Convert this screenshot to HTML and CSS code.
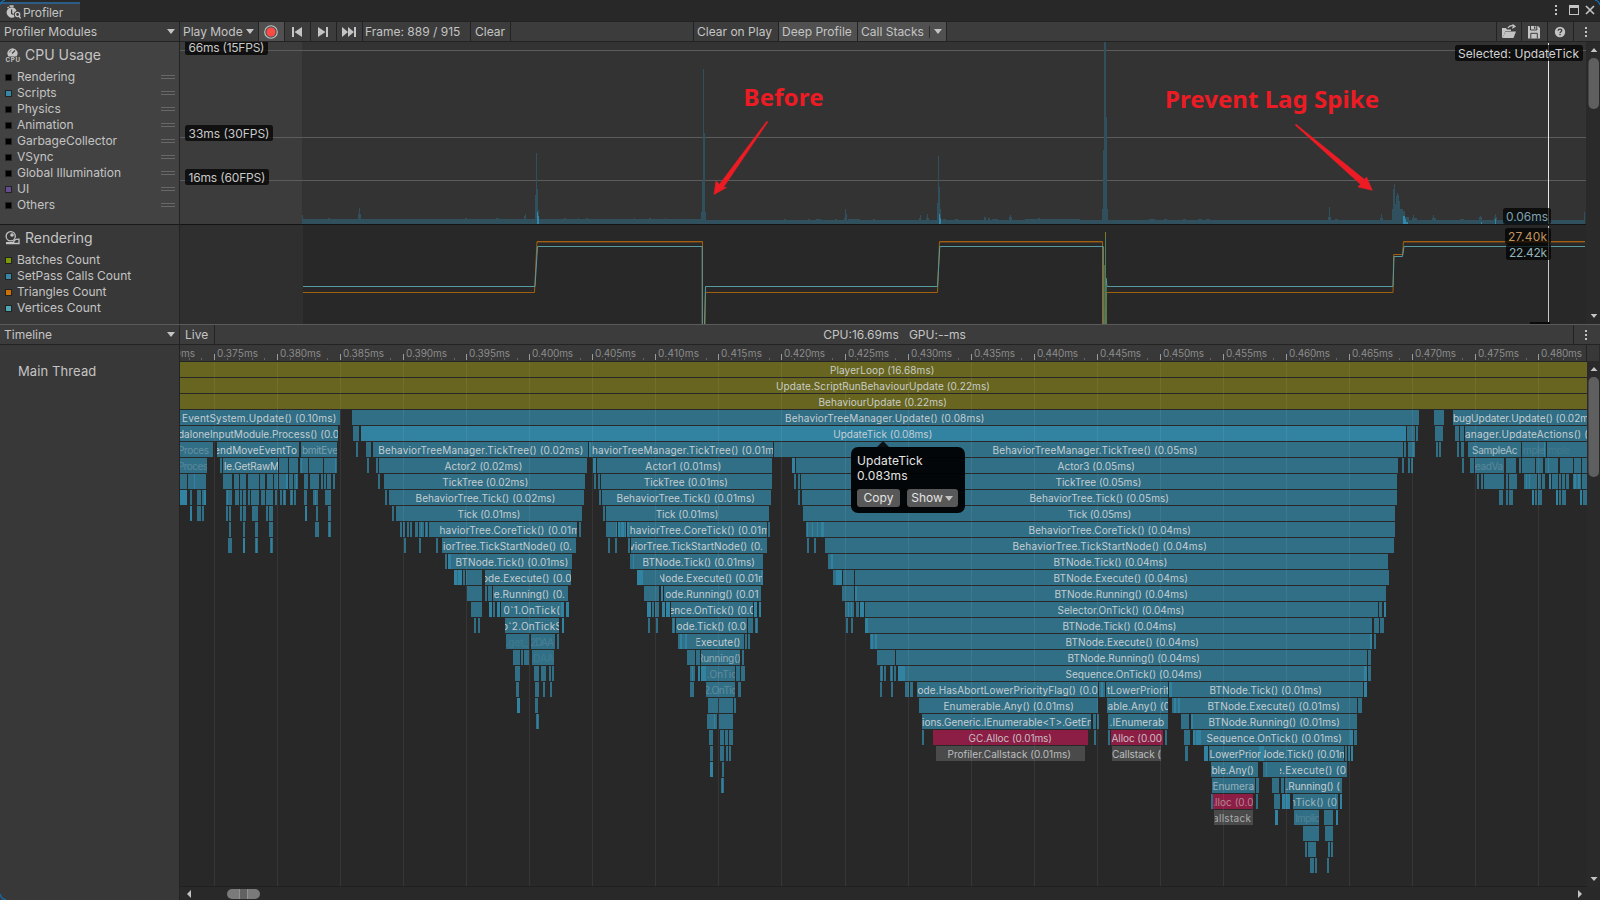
FILE: index.html
```html
<!DOCTYPE html>
<html lang="en">
<head>
<meta charset="utf-8">
<title>Profiler</title>
<link rel="stylesheet" href="styles.css">
</head>
<body>
<div class="window">
  <header class="titlebar">
    <div class="tab">
      <svg class="tab-icon" width="15" height="15" viewBox="0 0 15 15"><path d="M3.6 0.3h4v1.6h-4z" fill="#c4c4c4"/><path d="M1 2.6l1.3-1 .9 1-1.2 1z" fill="#c4c4c4"/><path d="M5.6 2.2a5.3 5.3 0 0 1 4.9 3.9C8.4 6.6 7.600 8 8 10.500c.1.800.5 1.300.7 1.500A5.300 5.300 0 1 1 5.600 2.200z" fill="#c4c4c4"/><path d="M5.600 4.500v4l2 1" stroke="#3c3c3c" stroke-width="1.300" fill="none"/><circle cx="11.600" cy="9.500" r="2.100" fill="none" stroke="#c4c4c4" stroke-width="1.300"/><path d="M13 11l1.600 2.300" stroke="#c4c4c4" stroke-width="1.400"/></svg>
      <span class="tab-text">Profiler</span>
    </div>
    <svg class="window-icons" width="50" height="20" viewBox="1550 0 50 20"><g fill="#c4c4c4"><path d="M1555 5h2v2h-2zM1555 9h2v2h-2zM1555 13h2v2h-2z"/><path d="M1569 5h10v10h-10zM1570 8v6h8V8z" fill-rule="evenodd"/></g><path d="M1586 6l8 8M1594 6l-8 8" stroke="#c4c4c4" stroke-width="1.700"/></svg>
  </header>

  <div class="toolbar">
    <div class="cell modules"><span>Profiler Modules</span><i class="caret"></i></div>
    <div class="cell mode"><span>Play Mode</span><i class="caret"></i></div>
    <div class="cell rec"><svg width="16" height="16" viewBox="0 0 16 16"><circle cx="8" cy="8" r="6.300" fill="none" stroke="#c4c4c4" stroke-width="1.100"/><circle cx="8" cy="8" r="4.500" fill="#ff4b44"/></svg></div>
    <div class="cell step"><svg width="14" height="12" viewBox="0 0 14 12"><path d="M2 1h2v10H2zM12 1v10L4.500 6z" fill="#c4c4c4"/></svg></div>
    <div class="cell step"><svg width="14" height="12" viewBox="0 0 14 12"><path d="M10 1h2v10h-2zM2 1v10l7.500-5z" fill="#c4c4c4"/></svg></div>
    <div class="cell step"><svg width="16" height="12" viewBox="0 0 16 12"><path d="M1 1v10l6-5zM7 1v10l6-5zM13 1h2v10h-2z" fill="#c4c4c4"/></svg></div>
    <div class="cell frame"><span>Frame: 889 / 915</span></div>
    <div class="cell clear"><span>Clear</span></div>
    <div class="cell space"></div>
    <div class="cell clearplay"><span>Clear on Play</span></div>
    <div class="cell deep on"><span>Deep Profile</span></div>
    <div class="cell stacks on"><span>Call Stacks</span><b></b><i class="caret"></i></div>
    <div class="cell grow"></div>
    <div class="cell ico w25"><svg width="16" height="15" viewBox="0 0 16 15"><path d="M1 14V4h4l1 1.500h4V7H4.500L2 13z" fill="#c4c4c4"/><path d="M4.500 7.500H15L12.500 14H1.500z" fill="#c4c4c4"/><path d="M7 4c1-2 3.500-3 6-1.700M11.500.5l2.500 2-2.800 1.700" fill="none" stroke="#c4c4c4" stroke-width="1.200"/></svg></div>
    <div class="cell ico w26"><svg width="14" height="14" viewBox="0 0 14 14"><path d="M1 1h10l2 2v10.500H1z" fill="#c4c4c4"/><path d="M3.500 1v4h6.300V1M3.800 13.500V8.300h6.500v5.200" fill="none" stroke="#3c3c3c" stroke-width="1"/><path d="M7 1.500h1.300v2.200H7z" fill="#3c3c3c"/></svg></div>
    <div class="cell ico w26"><svg width="12" height="12" viewBox="0 0 12 12"><circle cx="6" cy="6" r="5.200" fill="#c4c4c4"/><path d="M4.200 4.700C4.200 2.400 7.800 2.600 7.800 4.600 7.800 5.800 6 5.700 6 7.200M6 8v1.300" fill="none" stroke="#3c3c3c" stroke-width="1.300"/></svg></div>
    <div class="cell ico last"><svg width="4" height="12" viewBox="0 0 4 12"><path d="M1 1h2v2H1zM1 5h2v2H1zM1 9h2v2H1z" fill="#c4c4c4"/></svg></div>
  </div>

  <div class="charts">
    <aside class="modules-panel">
      <section class="module cpu">
        <h2><svg width="16" height="16" viewBox="0 0 16 16"><path d="M3.500 9.500A5 5 0 1 1 11.500 9.500z" fill="#c4c4c4"/><path d="M7 6.500l3-3" stroke="#424242" stroke-width="1.300"/><path d="M4.300 5.500l.7-1.500 1.500-.8" stroke="#424242" stroke-width=".7" fill="none"/><text x=".5" y="15.300" font-size="6.200" font-weight="700" textLength="14.500" fill="#c4c4c4">CPU</text></svg>CPU Usage</h2>
        <ul>
          <li><i class="sw black"></i>Rendering<u></u></li>
          <li><i class="sw blue"></i>Scripts<u></u></li>
          <li><i class="sw black"></i>Physics<u></u></li>
          <li><i class="sw black"></i>Animation<u></u></li>
          <li><i class="sw black"></i>GarbageCollector<u></u></li>
          <li><i class="sw black"></i>VSync<u></u></li>
          <li><i class="sw black"></i>Global Illumination<u></u></li>
          <li><i class="sw purple"></i>UI<u></u></li>
          <li><i class="sw black"></i>Others<u></u></li>
        </ul>
      </section>
      <section class="module rendering">
        <h2><svg width="16" height="16" viewBox="0 0 16 16"><circle cx="5.700" cy="6.300" r="4.600" fill="none" stroke="#c4c4c4" stroke-width="1.300"/><circle cx="7" cy="5" r="1.800" fill="#c4c4c4"/><path d="M8.500 12.500c.5-2.500 1.500-3.500 5.500-3.300v4.300H1" fill="none" stroke="#c4c4c4" stroke-width="1.300"/><path d="M1 12h8v2H1z" fill="#c4c4c4"/></svg>Rendering</h2>
        <ul>
          <li><i class="sw green"></i>Batches Count</li>
          <li><i class="sw blue"></i>SetPass Calls Count</li>
          <li><i class="sw orange"></i>Triangles Count</li>
          <li><i class="sw teal"></i>Vertices Count</li>
        </ul>
      </section>
    </aside>
    <svg class="chart" id="chart" width="1406" height="282" viewBox="180 42 1406 282"></svg>
    <svg class="vscroll" width="14" height="282" viewBox="1586 42 14 282"><path d="M1594 48l3.300 4h-6.600zM1594 318l3.300-4h-6.600z" fill="#c4c4c4"/><rect x="1588.500" y="58" width="10.500" height="51" rx="5" fill="#5f5f5f"/></svg>
  </div>

  <div class="toolbar details">
    <div class="cell modules"><span>Timeline</span><i class="caret"></i></div>
    <div class="cell live"><span>Live</span></div>
    <div class="cell grow stats"><span>CPU:16.69ms&nbsp;&nbsp; GPU:--ms</span></div>
    <div class="cell ico last"><svg width="4" height="12" viewBox="0 0 4 12"><path d="M1 1h2v2H1zM1 5h2v2H1zM1 9h2v2H1z" fill="#c4c4c4"/></svg></div>
  </div>

  <div class="timeline">
    <aside class="threads"><span>Main Thread</span></aside>
    <svg class="flame" id="flame" width="1420" height="555" viewBox="180 345 1420 555"></svg>
    <div class="popup">
      <div class="popup-text">UpdateTick<br>0.083ms</div>
      <div class="popup-buttons"><span class="btn copy">Copy</span><span class="btn show">Show<i class="caret"></i></span></div>
    </div>
  </div>
  <svg class="corners" width="1600" height="900" viewBox="0 0 1600 900"><g fill="none" stroke="#176aa8" stroke-width="1.300"><path d="M0 5Q1 1 5 0"/><path d="M1595 0Q1599 1 1600 5"/><path d="M0 894Q1 899 6 900"/></g></svg>
</div>
<script src="timeline.js"></script>
</body>
</html>
```
FILE: styles.css
```css
* { box-sizing: border-box; }
body { margin: 0; background: #282828; overflow: hidden; }
.window {
  width: 1600px; height: 900px; position: relative;
  display: flex; flex-direction: column;
  font-family: Inter, "Liberation Sans", sans-serif;
  font-size: 12px; color: #c4c4c4; background: #282828;
}
.titlebar { height: 21px; display: flex; justify-content: space-between; background: #282828; }
.tab {
  width: 80px; height: 19px; margin-top: 2px; padding-left: 6px;
  display: flex; align-items: center; gap: 2px;
  background: #3c3c3c; border-top: 2px solid #2c5d87;
}
.tab-icon { margin-top: -1px; flex: none; }
.tab-text { letter-spacing: -0.1px; line-height: 16px; }
.toolbar { height: 21px; display: flex; background: #3c3c3c; border-top: 1px solid #232323; border-bottom: 1px solid #232323; }
.cell {
  height: 19px; flex: none; display: flex; align-items: center; white-space: nowrap;
  border-right: 1px solid #232323; line-height: 19px;
}
.caret { width: 0; height: 0; flex: none; border: 4px solid transparent; border-top: 5px solid #c4c4c4; border-bottom: 0; }
.modules { width: 180px; padding: 0 4px; justify-content: space-between; }
.mode { width: 79px; padding: 0 4px 0 3px; justify-content: space-between; }
.rec { width: 26px; padding-right: 2px; justify-content: center; background: #505050; }
.step { width: 26px; padding-right: 2px; justify-content: center; }
.frame { width: 108px; padding-left: 2px; }
.clear { width: 40px; padding-left: 4px; }
.space { width: 183px; }
.clearplay { width: 85px; padding-left: 3px; }
.deep { width: 79px; padding-left: 3px; }
.on { background: #505050; }
.stacks { width: 89px; padding-left: 3px; }
.stacks b { width: 1px; height: 12px; margin: 0 4px 0 5px; background: #2c2c2c; }
.grow { flex: 1; }
.ico { justify-content: center; padding-right: 1px; }
.w25 { width: 25px; }
.w26 { width: 26px; }
.last { width: 26px; border-right: 0; padding-right: 2px; }
.charts { height: 282px; display: flex; }
.modules-panel { width: 180px; border-right: 1px solid #232323; display: flex; flex-direction: column; }
.module { padding: 2px 4px 0 5px; }
.cpu { height: 183px; background: #424242; border-bottom: 1px solid #191919; }
.rendering { height: 99px; background: #383838; }
.module h2 { margin: 0 0 5px; height: 20px; display: flex; align-items: center; gap: 4px; font-size: 14px; font-weight: 400; letter-spacing: 0; }
.module h2 svg { margin-top: 1px; }
.module ul { margin: 0; padding: 0; list-style: none; }
.module li { height: 16px; display: flex; align-items: center; line-height: 16px; }
.sw { width: 7px; height: 7px; margin-right: 5px; border: 1px solid #222; flex: none; }
.black { background: #000; } .blue { background: #3588a8; } .purple { background: #654b8f; }
.green { background: #7c9a06; } .orange { background: #cb7204; } .teal { background: #4ea8b4; }
.module li u { width: 14px; height: 4px; margin-left: auto; border-top: 1px solid #686868; border-bottom: 1px solid #686868; }
.vscroll { background: #2a2a2a; flex: none; }
.chart { flex: none; display: block; }
.details { border-top-color: #5a5a5a; }
.live { width: 35px; padding-left: 5px; }
.stats { justify-content: center; padding-left: 1px; }
.timeline { height: 555px; display: flex; position: relative; }
.threads { width: 180px; padding: 16px 0 0 18px; background: #383838; border-right: 1px solid #232323; font-size: 13px; line-height: 20px; letter-spacing: .1px; }
.flame { flex: none; display: block; }
.bt { font-size: 10px; fill: #d2d6d8; }
.rl { font-size: 10px; fill: #8c8c8c; }
.lb { font-size: 12px; fill: #c8c8c8; }
.note { font-family: "Noto Sans", "Open Sans", sans-serif; font-size: 24px; font-weight: 700; fill: #ed1c24; }
.popup {
  position: absolute; left: 851px; top: 102px; width: 114px; height: 66px; padding: 6px 6px;
  background: rgba(0, 0, 0, .94); border-radius: 7px; color: #e4e4e4;
}
.popup::before { content: ""; position: absolute; left: 26px; top: -6px; border: 6px solid transparent; border-bottom-color: #0b1114; border-top: 0; }
.popup-text { line-height: 15px; letter-spacing: .15px; }
.popup-buttons { margin-top: 6px; display: flex; gap: 7px; }
.btn { height: 18px; line-height: 18px; border-radius: 3px; background: #585858; display: flex; align-items: center; justify-content: center; gap: 2px; }
.copy { width: 43px; } .show { width: 51px; padding-right: 1px; }
.corners { position: absolute; left: 0; top: 0; pointer-events: none; }
```
FILE: timeline.js
```js
// ---- Module charts ----
(function () {
  let s = '';
  const rect = (x, y, w, h, f, extra) => { s += `<rect x="${x}" y="${y}" width="${w}" height="${h}" fill="${f}" ${extra || ''}/>`; };
  rect(180, 42, 122, 182, '#3c3c3c');
  rect(302, 42, 1284, 182, '#333333');
  rect(180, 225, 123, 99, '#2f2f2f');
  rect(303, 225, 1283, 99, '#282828');
  [50, 137, 180].forEach(y => rect(180, y, 1406, 1, '#5c5c5c'));

  // script time per frame: base band plus [x, top, width] spikes
  const area = '#31505d';
  rect(302, 219, 402, 5, area);
  rect(704, 220, 881, 4, area);
  [[302, 215, 1], [358, 214, 3], [359, 208, 1], [328, 218, 2], [465, 218, 2], [496, 218, 3], [524, 216, 2], [525, 214, 1],
   [535, 195, 2], [536, 153, 1], [537, 189, 1], [538, 210, 1],
   [564, 218, 2], [578, 218, 1], [586, 218, 2], [634, 218, 1], [649, 218, 2], [665, 218, 1],
   [701, 212, 5], [702, 181, 1], [703, 69, 1], [704, 133, 1],
   [784, 219, 2], [808, 219, 2], [816, 219, 5], [835, 219, 2], [844, 218, 3], [845, 209, 1], [846, 214, 1], [848, 219, 12], [873, 219, 2],
   [919, 218, 2], [920, 215, 1], [926, 218, 3], [927, 214, 1],
   [937, 203, 2], [938, 156, 1], [939, 187, 1], [940, 209, 1], [943, 219, 3], [955, 219, 3], [984, 217, 2], [988, 218, 2], [992, 219, 6],
   [1009, 217, 3], [1010, 215, 1], [1025, 219, 55], [1038, 218, 2],
   [1102, 209, 6], [1103, 150, 1], [1104, 42, 2], [1106, 117, 1],
   [1149, 219, 6], [1164, 219, 3], [1183, 219, 3], [1198, 219, 4], [1206, 219, 4],
   [1328, 217, 3], [1329, 207, 1], [1335, 219, 3], [1380, 218, 3], [1381, 214, 1],
   [1392, 209, 11], [1393, 189, 1], [1394, 184, 1], [1395, 204, 1], [1396, 196, 1], [1397, 193, 1], [1398, 195, 1], [1399, 201, 1], [1400, 209, 1],
   [1403, 211, 2], [1405, 217, 4], [1412, 218, 5], [1413, 215, 1], [1432, 218, 4], [1433, 215, 1], [1460, 219, 4], [1479, 217, 3], [1480, 216, 1],
   [1494, 217, 3], [1495, 214, 1], [1584, 212, 1]
  ].forEach(([x, y, w]) => rect(x, y, w, 224 - y, area));
  [[537, 212, 1], [538, 216, 1], [939, 214, 1], [940, 218, 1], [1403, 216, 2], [1405, 219, 1], [1406, 222, 2], [1481, 222, 1], [1495, 219, 1]]
    .forEach(([x, y, w]) => rect(x, y, w, 224 - y, '#3288ab'));
  rect(180, 224, 1406, 1, '#141414');

  // geometry counters
  const line = (d, c, o) => { s += `<path d="${d}" fill="none" stroke="${c}" stroke-width="1" opacity="${o || 1}"/>`; };
  line('M537 242.500H702M939.500 242.500H1103M1404 242.500H1585', '#6a4420', .7);
  line('M303 292.500H534.500L537 241.500H702.500V324M705 324L705.500 292.500H937.500L939.500 241.500H1102.500V324M1106.500 324V292.500H1393L1393.700 254.500H1402.500L1403.500 241.500H1585', '#a2600f');
  line('M303 286.500H535L537.500 246.500H702.200V324M704.500 324L705.500 286.500H937.500L939.800 246.500H1103.300V324M1105 324L1106 278L1107 286.500H1393L1394 256.500H1402.500L1404 246.500H1585', '#559aa0');
  rect(1105, 233, 1, 91, '#4d7f58');
  rect(1106, 286, 1, 38, '#4d7f58', 'opacity=".7"');
  rect(1103, 265, 2, 59, '#64794f', 'opacity=".7"');
  rect(1105, 232, 1, 6, '#7c7b1f');

  // selected frame marker and labels
  const label = (x, y, w, h, t, tx, ty, tl, c) => {
    rect(x, y, w, h, '#000', 'rx="2.5" opacity=".72"');
    s += `<text class="lb" x="${tx}" y="${ty}" textLength="${tl}" style="fill:${c}">${t}</text>`;
  };
  rect(1548, 43, 1, 181, '#e6e6e6');
  rect(1548, 226, 1, 98, '#c8c8c8');
  label(185, 38, 83, 17, '66ms (15FPS)', 188.5, 52, 76, '#c8c8c8');
  label(185, 125, 88, 16, '33ms (30FPS)', 188.500, 138, 81, '#c8c8c8');
  label(185, 169, 84, 16, '16ms (60FPS)', 188.500, 182, 77, '#c8c8c8');
  label(1455, 45, 128, 16, 'Selected: UpdateTick', 1458, 58, 121, '#d2d2d2');
  label(1503, 208, 48, 16, '0.06ms', 1506, 221, 42, '#7ea3b2');
  label(1505, 228, 46, 16, '27.40k', 1508, 241, 39, '#c2935c');
  label(1506, 244, 45, 16, '22.42k', 1509, 257, 38, '#8fb3b8');
  rect(1530, 322, 20, 2, '#0a0a0a');

  s += '<text class="note" x="743.500" y="106" textLength="80">Before</text>';
  s += '<text class="note" x="1165" y="108" textLength="214">Prevent Lag Spike</text>';
  s += '<path d="M766.800 121.300L767.800 122L723.500 187.300L726.500 187.500L714 194.500L716 181L719.500 184.300z" fill="#ed1c24" stroke="#ed1c24" stroke-width=".6"/>';
  s += '<path d="M1295.300 125.200L1296 124.300L1364.500 179.500L1366.500 177L1372.300 190.300L1358 187L1360.500 184.300z" fill="#ed1c24" stroke="#ed1c24" stroke-width=".6"/>';
  document.getElementById('chart').innerHTML = s;
})();

// ---- Timeline flame view ----
(function () {
  const ROW = 16, TOP = 362;
  // samples per depth as start-end pixels; "b" marks the brighter tint
  const rows = {
    3: '180-340 352-1419 1434-1444 1453-1587',
    4: '180-338 353-359 361-1406b 1407-1415 1416-1418 1435-1443 1455-1459 1460-1464 1465-1587',
    5: '180-213 217-299 301-337 356-358 366-371 373-588 589-591b 591-773 774-1403 1404-1406 1408-1415 1413-1414b 1436-1438 1439-1441 1457-1459 1461-1464 1468-1521 1522-1546 1544-1545b 1547-1587',
    6: '180-207 220-222 223-278 279-288 289-298 300-308 301-302b 309-323 324-337 335-336b 367-369 376-378 379-587 593-596b 597-772 792-795b 796-1398 1402-1404 1408-1410 1411-1413 1462-1464 1470-1474 1475-1504 1506-1516 1519-1521 1522-1535 1536-1543 1545-1558 1548-1549b 1560-1573 1574-1581 1582-1587',
    7: '180-187 188-206 194-195b 223-232 234-239 240-246 248-259 260-265 267-273 274-278 279-286 286-288b 289-293 294-298 296-297b 304-308 310-319 321-323 324-326 327-331 333-335 378-380 384-585 594-596 598-600 601-772 794-796 798-800 801-1397 1477-1479 1481-1483 1484-1504 1506-1508 1509-1517 1524-1537 1526-1527b 1529-1530b 1538-1541 1542-1545 1549-1551b 1552-1558 1559-1561 1562-1565 1566-1569 1573-1581 1574-1576b 1578-1580b 1582-1587',
    8: '180-187b 190-192 197-201 202-206 204-206b 226-232 227-228b 235-239 240-242 243-246 248-250 251-259 261-265 266-273 275-277 280-282 283-286 284-285b 290-293 291-292b 294-296 304-307 313-318 315-316b 325-331 385-387 389-584 599-601 602-771 798-800 802-1397 1499-1503 1506-1508 1509-1513 1532-1534b 1535-1537 1538-1542 1556-1558b 1559-1561 1562-1566 1580-1582b 1583-1587',
    9: '190-192b 197-201 202-204 226-228 229-231 240-242 243-246 252-258 266-268 269-273 305-307b 316-318 328-331 392-394 396-582 603-605 606-769 803-1395',
    10: '229-231 243-245 255-258 269-273 315-319 328-331 329-330b 400-402 403-405 407-409 410-412 415-418 419-424 421-422b 425-428 426-427b 429-577 579-581 606-617 616-617b 618-626b 620-621 624-625 627-629b 629-767 768-770 806-824 807-808b 812-813b 817-818b 821-824b 824-1395',
    11: '228-232 243-245b 255-258 256-257b 270-273 271-272b 404-406 419-421 436-438 442-576 608-610 615-617 628-630 631-767 807-809 814-816 825-1394',
    12: '445-447 448-451b 451-572 630-635 633-634b 635-763 828-833 831-833b 833-1388',
    13: '454-462b 457-458 463-465 466-482 485-571 637-643b 643-762 761-763b 833-836 836-842b 843-854 855-1389',
    14: '467-482 485-487 488-492 493-568 644-659 661-663b 664-761 842-854 855-857b 857-1386',
    15: '471-482 489-492b 493-495 497-500b 501-561 561-564b 566-569b 647-651b 652-654 655-659 662-665b 666-670b 671-753 754-757b 759-761b 845-854 848-849b 851-852b 856-859 860-864b 865-1378 1379-1382 1384-1386b',
    16: '474-476 478-480 505-559 562-564b 648-650 656-658 672-675 673-674b 676-747 748-753 755-758 756-757b 846-848 851-853 865-868b 868-1372 1374-1379 1380-1384',
    17: '506-529 531-555 557-559 678-687 680-682b 685-687b 687-744 745-747 748-750 870-877 871-873b 875-877b 877-1371 1370-1372b 1374-1376',
    18: '513-520 521-523 524-529 532-554 687-695 696-700 701-740 742-744 877-895 896-1367 1368-1371',
    19: '515-520 534-539 541-546 549-551 552-554 690-695 692-693b 698-700b 701-706b 706-735 736-740 741-745 880-883 881-882b 884-886 890-893 891-892b 894-896 898-905b 905-1364 1364-1367b 1368-1371',
    20: '516-519 535-539 543-545 550-552 690-694 706-735 738-741 880-882 891-893 905-909 910-913 917-1098 1099-1105 1101-1103b 1106-1168 1169-1172b 1172-1363 1364-1367b',
    21: '517-520b 535-538 708-718 719-733 734-736 919-1098 1107-1168 1172-1181 1174-1176b 1178-1180b 1181-1357 1358-1362',
    22: '536-539 537-538b 707-717 714-715b 719-733 922-1091 1093-1096 1097-1099 1108-1168 1181-1189 1191-1193b 1193-1357',
    23: '709-713 720-724 725-728 729-733 922-924 1094-1096 1108-1110 1165-1167 1184-1190 1193-1201b 1195-1196 1201-1350 1350-1353b 1354-1357',
    24: '710-713 720-724 726-728 729-731 1185-1188 1204-1208b 1209-1261 1259-1264b 1264-1344 1345-1347 1348-1350 1351-1353b',
    25: '710-713b 722-724 1211-1258 1263-1270 1266-1267b 1270-1347',
    26: '721-724 722-723b 1212-1255 1256-1259 1272-1279 1281-1284 1285-1342',
    27: '1211-1213 1256-1258 1274-1280 1282-1290b 1285-1286 1293-1338 1335-1336b 1340-1342b',
    28: '1275-1278b 1294-1319 1324-1333 1336-1338b',
    29: '1303-1319 1325-1333',
    30: '1305-1307 1308-1316 1328-1330 1331-1333',
    31: '1310-1314 1315-1317 1327-1329'
  };
  const special = [[23, 933, 1088, '#8c1d44'], [23, 1111, 1163, '#8c1d44'], [24, 936, 1085, '#4a4a4a'], [24, 1112, 1161, '#4a4a4a'],
    [27, 1213, 1253, '#8c1d44'], [28, 1214, 1253, '#4a4a4a']];

  // labels: depth, text start, text end, text, opacity, clip start
  const T = [
    [0, 830, 934.500, 'PlayerLoop (16.68ms)'], [1, 776, 990, 'Update.ScriptRunBehaviourUpdate (0.22ms)'], [2, 818.5, 947, 'BehaviourUpdate (0.22ms)'],
    [3, 182, 336.3, 'EventSystem.Update() (0.10ms)'], [3, 785, 984.500, 'BehaviorTreeManager.Update() (0.08ms)'], [3, 1453, 1589, 'bugUpdater.Update() (0.02m'],
    [4, 178, 339, 'daloneInputModule.Process() (0.0'], [4, 833.3, 932.300, 'UpdateTick (0.08ms)'], [4, 1465, 1588, 'anager.UpdateActions() ('],
    [5, 178, 209, 'Proces', .35], [5, 214, 297, 'endMoveEventTo'], [5, 302, 338, 'bmitEve', .5],
    [5, 378.3, 583.3, 'BehaviorTreeManager.TickTree() (0.02ms)'], [5, 592, 774, 'haviorTreeManager.TickTree() (0.01m'],
    [5, 992.500, 1197.500, 'BehaviorTreeManager.TickTree() (0.05ms)'], [5, 1472, 1517.500, 'SampleAc', .85], [5, 1523, 1545, 'mple', .15], [5, 1548, 1570, 'mple', .08],
    [6, 178, 208, 'Proces', .25], [6, 224, 279, 'le.GetRawM'], [6, 444.500, 522.300, 'Actor2 (0.02ms)'], [6, 645.300, 721.300, 'Actor1 (0.01ms)'], [6, 1057.500, 1135, 'Actor3 (0.05ms)'], [6, 1475, 1503, 'eadVa', .25],
    [7, 442.300, 528.300, 'TickTree (0.02ms)'], [7, 643.700, 728, 'TickTree (0.01ms)'], [7, 1055.500, 1141.300, 'TickTree (0.05ms)'],
    [8, 415.500, 555.300, 'BehaviorTree.Tick() (0.02ms)'], [8, 616.500, 755, 'BehaviorTree.Tick() (0.01ms)'], [8, 1029.500, 1169, 'BehaviorTree.Tick() (0.05ms)'],
    [9, 457.500, 520.300, 'Tick (0.01ms)'], [9, 655.700, 718.300, 'Tick (0.01ms)'], [9, 1067.500, 1131.300, 'Tick (0.05ms)'],
    [10, 439.500, 580, 'haviorTree.CoreTick() (0.01m'], [10, 629.700, 770, 'haviorTree.CoreTick() (0.01m'], [10, 1028.500, 1191, 'BehaviorTree.CoreTick() (0.04ms)'],
    [11, 443, 572, 'iorTree.TickStartNode() (0.'], [11, 629, 763, 'viorTree.TickStartNode() (0.'], [11, 1012.500, 1207, 'BehaviorTree.TickStartNode() (0.04ms)'],
    [12, 455.500, 568.300, 'BTNode.Tick() (0.01ms)'], [12, 642.500, 755, 'BTNode.Tick() (0.01ms)'], [12, 1053.500, 1167.300, 'BTNode.Tick() (0.04ms)'],
    [13, 482, 571.500, 'ode.Execute() (0.0', 1, 485], [13, 657.500, 767, 'Node.Execute() (0.01m', 1, 660], [13, 1053.500, 1188, 'BTNode.Execute() (0.04ms)'],
    [14, 487.500, 565, 'de.Running() (0.', 1, 493], [14, 665.300, 758.500, 'ode.Running() (0.01'], [14, 1054.500, 1188, 'BTNode.Running() (0.04ms)'],
    [15, 503.500, 560, '0`1.OnTick('], [15, 668.500, 755.500, 'ence.OnTick() (0.0', 1, 671], [15, 1057.500, 1184.500, 'Selector.OnTick() (0.04ms)'],
    [16, 502, 562, 'o`2.OnTickS', 1, 505], [16, 676.500, 746, 'ode.Tick() (0.0'], [16, 1062.500, 1176.500, 'BTNode.Tick() (0.04ms)'],
    [17, 505.500, 528, '.get_', .1], [17, 530, 554, '2DAA', .16], [17, 695, 740.500, 'Execute()', 1, 696.500], [17, 1065.500, 1199, 'BTNode.Execute() (0.04ms)'],
    [18, 533, 554, 'DAA', .1], [18, 697, 741, 'Running()', .65, 701], [18, 1067.500, 1200, 'BTNode.Running() (0.04ms)'],
    [19, 707, 737, '.OnTic', .3], [19, 1065.500, 1202, 'Sequence.OnTick() (0.04ms)'],
    [20, 704, 737, '2.OnTic', .3], [20, 917.500, 1102, 'ode.HasAbortLowerPriorityFlag() (0.01'], [20, 1107, 1169, 'tLowerPriorit'], [20, 1209.500, 1322, 'BTNode.Tick() (0.01ms)'],
    [21, 943.500, 1074, 'Enumerable.Any() (0.01ms)'], [21, 1107.500, 1170, 'able.Any() (0'], [21, 1207.500, 1340, 'BTNode.Execute() (0.01ms)'],
    [22, 922, 1093, 'ions.Generic.IEnumerable&lt;T&gt;.GetEn'], [22, 1109.500, 1164, '.IEnumerab'], [22, 1208.500, 1340, 'BTNode.Running() (0.01ms)'],
    [23, 968.500, 1052, 'GC.Alloc (0.01ms)', .95], [23, 1111.500, 1162, 'Alloc (0.00', .95], [23, 1206.500, 1342, 'Sequence.OnTick() (0.01ms)'],
    [24, 947.500, 1071, 'Profiler.Callstack (0.01ms)', .9], [24, 1112, 1161, 'Callstack (', .9], [24, 1209.500, 1261, 'LowerPrior'], [24, 1259, 1348, 'Node.Tick() (0.01m', 1, 1262],
    [25, 1211.500, 1254, 'ble.Any()'], [25, 1276, 1346, 'e.Execute() (0', 1, 1280], [26, 1212.500, 1254, 'Enumera', .7], [26, 1285.500, 1340, '.Running() ('],
    [27, 1208, 1253.500, 'Alloc (0.0', .6, 1214], [27, 1290, 1337, 'nTick() (0', .75, 1293], [28, 1213, 1251, 'allstack', .75, 1215], [28, 1295, 1320, 'Implic', .2]
  ];

  let s = '';
  const rect = (x, y, w, h, f) => { s += `<rect x="${x}" y="${y}" width="${w}" height="${h}" fill="${f}"/>`; };
  rect(180, 345, 1407, 17, '#383838');
  rect(180, 361, 1407, 1, '#242424');
  const px = i => Math.floor(214.4 + i * 63.06);
  for (let d = 0; d < 3; d++) rect(180, TOP + d * ROW, 1407, 15, '#67651f');
  const spans = [];
  for (const d in rows) {
    rows[d].split(' ').forEach(r => {
      const m = r.match(/^(\d+)-(\d+)(b?)$/);
      rect(+m[1], TOP + d * ROW, m[2] - m[1], 15, m[3] ? '#3282a2' : '#316f86');
      spans.push([+d, +m[1], +m[2]]);
    });
  }
  special.forEach(([d, a, b, c]) => { rect(a, TOP + d * ROW, b - a, 15, c); spans.push([d, a, b]); });
  for (let i = 0; i < 22; i++) s += `<rect x="${px(i)}" y="362" width="1" height="525" fill="#fff" opacity=".065"/>`;

  // ruler
  for (let i = -1; i < 22; i++) {
    rect(px(i), 354, 1, 6, '#9a9a9a');
    for (let k = 1; k < 5; k++) rect(px(i + k / 5), 358, 1, 2, '#666');
    s += `<text class="rl" x="${px(i) + 3}" y="357" textLength="41">${(0.375 + i * 0.005).toFixed(3)}ms</text>`;
  }

  T.forEach(([d, a, b, t, o, clipFrom], i) => {
    const mid = (a + b) / 2;
    const hit = spans.filter(q => q[0] === d && q[1] <= mid && q[2] >= mid).sort((p, q) => (q[2] - q[1]) - (p[2] - p[1]))[0] || [d, 180, 1587];
    const x0 = Math.max(clipFrom || 0, hit[1]), y = TOP + d * ROW;
    s += `<clipPath id="c${i}"><rect x="${x0}" y="${y}" width="${hit[2] - x0}" height="15"/></clipPath>`;
    s += `<text class="bt" x="${a}" y="${y + 12}" textLength="${b - a}" opacity="${(o || 1) * .92}" clip-path="url(#c${i})">${t}</text>`;
  });

  // scrollbars
  rect(1587, 345, 13, 555, '#2a2a2a');
  rect(1587, 345, 12, 16, '#383838');
  rect(1586, 345, 1, 16, '#232323');
  rect(180, 887, 1420, 13, '#292929');
  rect(180, 886, 1407, 1, '#202020');
  s += '<rect x="1588.500" y="377" width="10.500" height="100" rx="5" fill="#5f5f5f"/><path d="M1594 367l3.500 4h-7zM1594 881l3.500-4h-7z" fill="#c4c4c4"/>';
  s += '<rect x="227" y="889" width="33" height="10" rx="5" fill="#7a7a7a"/><rect x="239" y="889" width="9" height="10" fill="#626262"/><path d="M239.500 889v10M247.500 889v10" stroke="#929292"/>';
  s += '<path d="M187 894l4-4v8zM1582 894l-4-4v8z" fill="#c4c4c4"/>';
  document.getElementById('flame').innerHTML = s;
})();
```
